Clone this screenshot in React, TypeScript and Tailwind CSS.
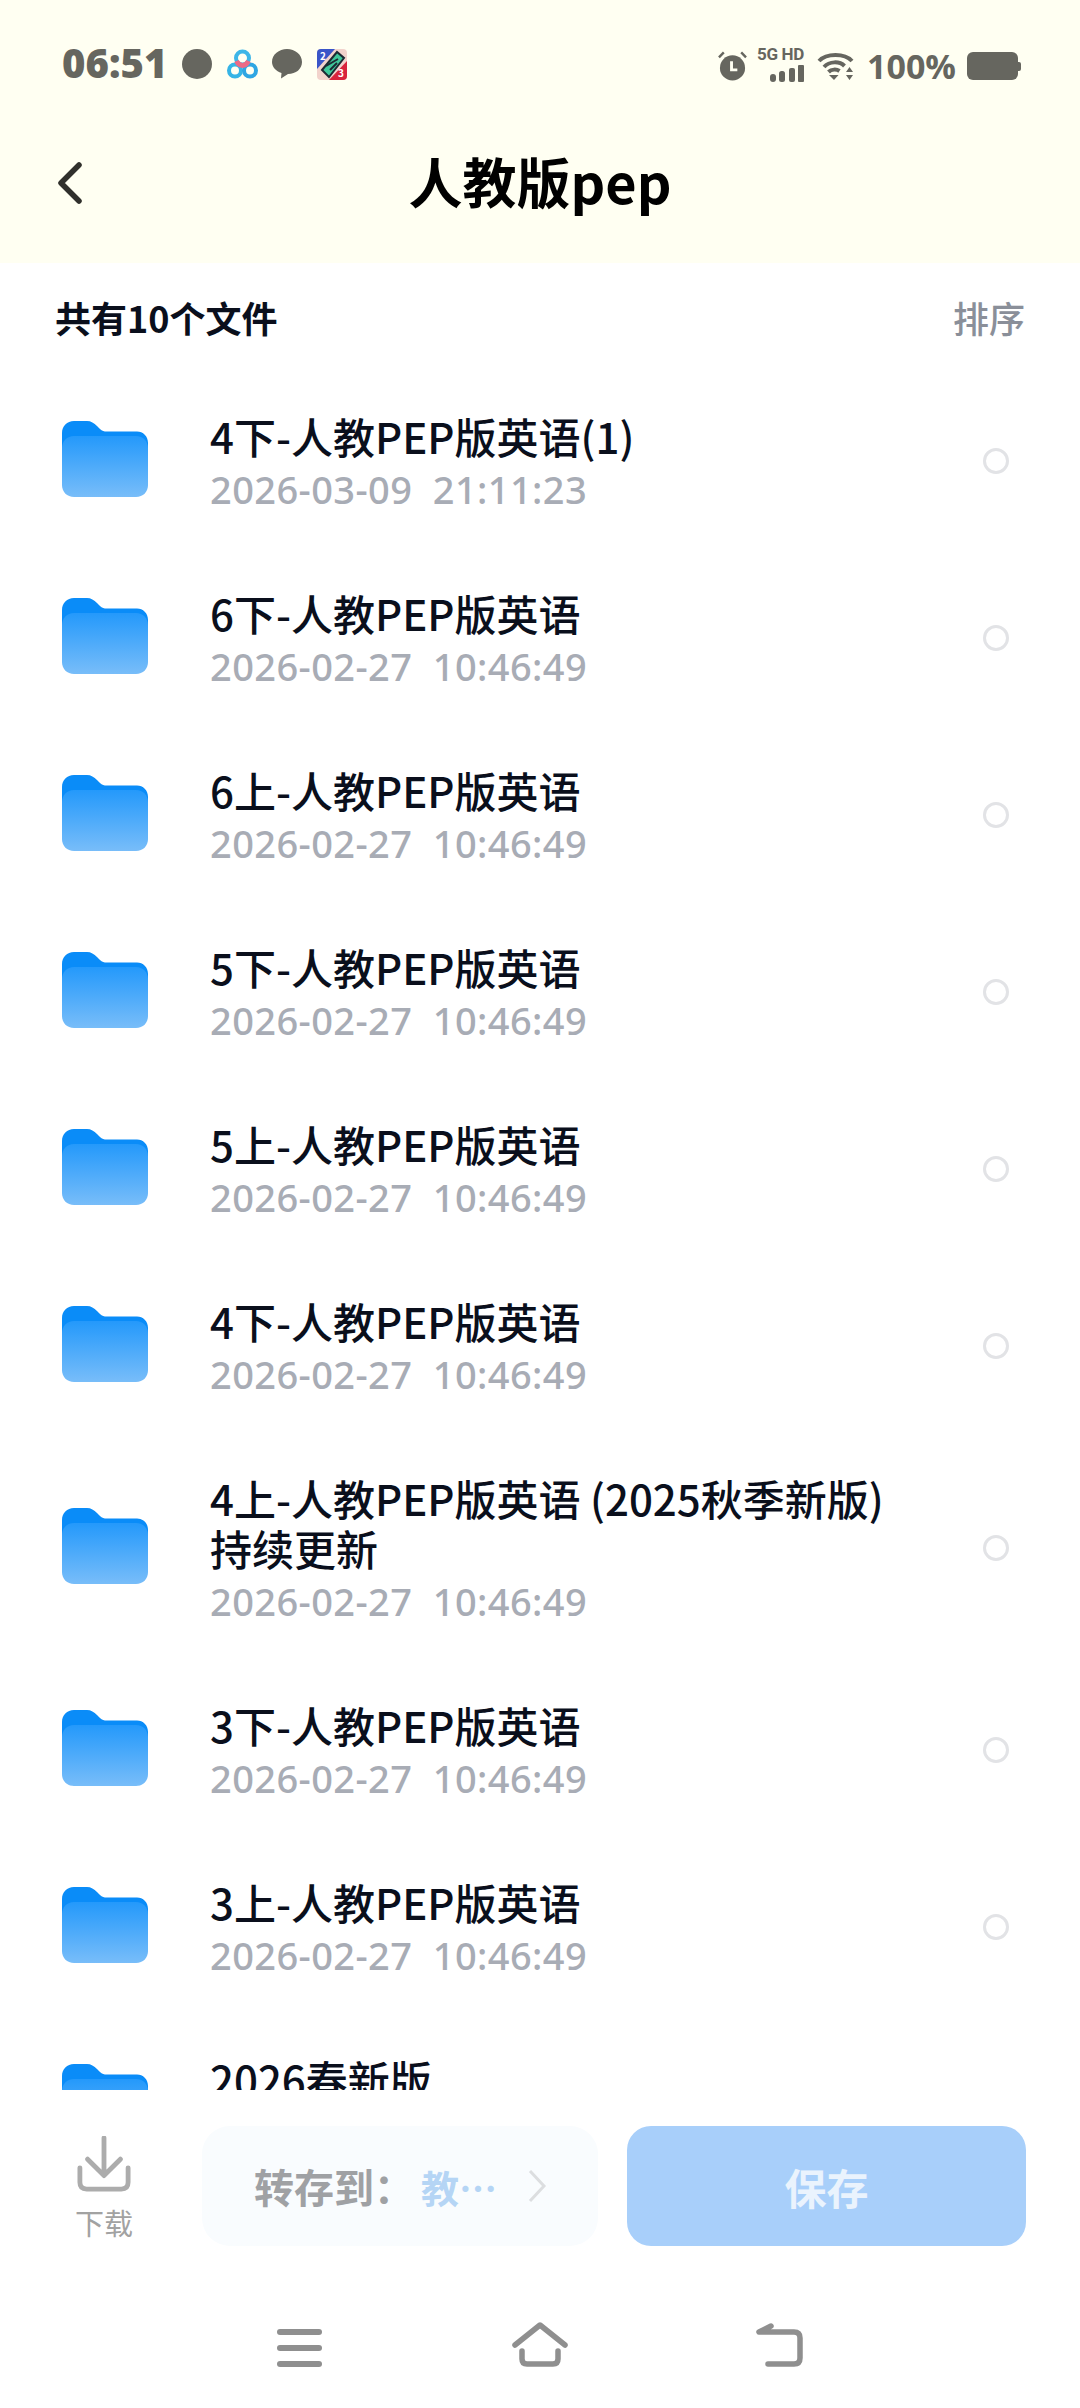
const files = [
  { name: '4下-人教PEP版英语(1)', date: '2026-03-09  21:11:23' },
  { name: '6下-人教PEP版英语', date: '2026-02-27  10:46:49' },
  { name: '6上-人教PEP版英语', date: '2026-02-27  10:46:49' },
  { name: '5下-人教PEP版英语', date: '2026-02-27  10:46:49' },
  { name: '5上-人教PEP版英语', date: '2026-02-27  10:46:49' },
  { name: '4下-人教PEP版英语', date: '2026-02-27  10:46:49' },
  { name: '4上-人教PEP版英语 (2025秋季新版)\n持续更新', date: '2026-02-27  10:46:49' },
  { name: '3下-人教PEP版英语', date: '2026-02-27  10:46:49' },
  { name: '3上-人教PEP版英语', date: '2026-02-27  10:46:49' },
  { name: '2026春新版', date: '2026-02-27  10:46:49' },
];

const FolderIcon = ({ id }: { id: number }) => (
  <svg width="86" height="76" viewBox="0 0 86 76" className="shrink-0 mb-[3px]">
    <defs>
      <linearGradient id={`folder${id}`} x1="0" y1="0" x2="0" y2="1">
        <stop offset="0" stopColor="#2499fb" />
        <stop offset="1" stopColor="#78bdf9" />
      </linearGradient>
    </defs>
    <path d="M0 12C0 5 5 0 12 0H25C29 0 32 2 35 5L38 8C40 10 42 10.500 45 10.500H75C81 10.500 86 15 86 22V40H0Z" fill="#0a8cf8" />
    <path d="M0 27C0 20 5 15 12 15H74C81 15 86 20 86 27V64C86 71 81 76 74 76H12C5 76 0 71 0 64Z" fill={`url(#folder${id})`} />
  </svg>
);

const StatusBar = () => (
  <div className="h-[130px] flex items-start justify-between pl-[62px] pr-[59px] pt-[48px]">
    <div className="flex items-center h-[36px] -mt-[2px]">
      <span className="w-[102px] mb-[3px] text-[40px] leading-none font-extrabold text-[#66665f] font-['Open_Sans',sans-serif]">06:51</span>
      <span className="w-[30px] h-[30px] rounded-full bg-[#66665f] ml-[18px]"></span>
      <svg width="31" height="30" viewBox="0 0 31 30" className="ml-[15px]" fill="none">
        <circle cx="15.500" cy="9" r="6.500" stroke="#3db6e8" strokeWidth="4" />
        <circle cx="8" cy="21.500" r="6" stroke="#36b4e6" strokeWidth="4" />
        <circle cx="23" cy="21.500" r="6" stroke="#2fa6e3" strokeWidth="4" />
        <path d="M9.500 12C11 15 13 16.500 15.500 16.500C18 16.500 20 15 21.500 12" stroke="#ec6a86" strokeWidth="5" />
      </svg>
      <svg width="30" height="30" viewBox="0 0 30 30" className="ml-[14px]">
        <path d="M15 0C23 0 30 5.500 30 13C30 20 24 25 16 25L9 29.500L9.500 24C4 22 0 18 0 13C0 5.500 7 0 15 0Z" fill="#66665f" />
      </svg>
      <svg width="30" height="31" viewBox="0 0 30 31" className="ml-[15px]">
        <rect width="30" height="31" rx="4" fill="#f2d3cc" />
        <path d="M0 4a4 4 0 0 1 4-4h14L0 20Z" fill="#3a55c8" />
        <path d="M30 27a4 4 0 0 1-4 4H12L30 12Z" fill="#d8243c" />
        <path d="M5 21L20 3L27 9L12 28Z" fill="#3fc79a" stroke="#1c2a33" strokeWidth="2" />
        <path d="M9 17L21 10M13 21L20 14" stroke="#1c2a33" strokeWidth="2" />
        <text x="3" y="11" fontSize="10" fontWeight="700" fill="#ffffff">2</text>
        <text x="21" y="28" fontSize="10" fontWeight="700" fill="#ffffff">3</text>
      </svg>
    </div>
    <div className="flex items-center h-[36px]">
      <svg width="29" height="30" viewBox="0 0 30 30">
        <circle cx="15" cy="17" r="13" fill="#66665f" />
        <path d="M14 10V19H20" stroke="#fffff2" strokeWidth="3" fill="none" />
        <path d="M1 6L6 1M29 6L24 1" stroke="#66665f" strokeWidth="2.500" />
      </svg>
      <div className="flex flex-col items-end ml-[10px] w-[47px]">
        <span className="text-[17px] leading-[14px] font-bold text-[#66665f] font-['Roboto',sans-serif] whitespace-nowrap mt-[-3px] tracking-[-0.3px]">5G HD</span>
        <svg width="34" height="17" viewBox="0 0 34 17" className="mt-[4px]">
          <rect x="0" y="9" width="6" height="8" rx="3" fill="#66665f" />
          <rect x="9" y="6" width="6" height="11" rx="2.500" fill="#66665f" />
          <rect x="19" y="3" width="6" height="14" rx="2" fill="#66665f" />
          <rect x="28" y="0" width="6" height="17" rx="1" fill="#66665f" />
        </svg>
      </div>
      <svg width="37" height="30" viewBox="0 0 36 30" className="ml-[13px]" fill="none">
        <path d="M1.500 10C9 2 27 2 34.500 10" stroke="#66665f" strokeWidth="4" />
        <path d="M6.500 16C12 10 22 10 27 15" stroke="#66665f" strokeWidth="4" />
        <path d="M11 21C14 18 19 18 22 20" stroke="#66665f" strokeWidth="4" />
        <path d="M11.500 24H21L16.500 29Z" fill="#66665f" />
        <path d="M32 16L35.500 21H28.500ZM28.500 24H35.500L32 29Z" fill="#66665f" />
      </svg>
      <span className="ml-[13px] text-[34px] leading-none font-bold text-[#66665f] font-['Open_Sans',sans-serif] whitespace-nowrap">100%</span>
      <div className="flex items-center ml-[11px]">
        <span className="w-[51px] h-[28px] rounded-[6px] bg-[#66665f]"></span>
        <span className="w-[3px] h-[9px] rounded-r-[2px] bg-[#66665f]"></span>
      </div>
    </div>
  </div>
);

const BottomBar = () => (
  <div className="shrink-0 h-[318px] bg-white">
    <div className="flex items-start pl-[70px] pt-[36px]">
      <div className="w-[68px] mt-[10px] flex flex-col items-center">
        <svg width="54" height="56" viewBox="0 0 56 58" fill="none" stroke="#acacac" strokeWidth="5" strokeLinecap="round" strokeLinejoin="round">
          <path d="M28 2V40M11 24L28 41L45 24" />
          <path d="M3 33V48C3 52 5 55 10 55H46C51 55 53 52 53 48V33" />
        </svg>
        <span className="mt-[15px] text-[29px] leading-[30px] text-[#a2a2a2] whitespace-nowrap">下载</span>
      </div>
      <div className="ml-[64px] w-[396px] h-[120px] rounded-[28px] bg-[#f9fcfe] flex items-center pl-[52px]">
        <span className="text-[40px] font-bold text-[#9fa1a4] whitespace-nowrap">转存到：</span>
        <span className="text-[38px] font-bold text-[#b5d5f5] whitespace-nowrap ml-[7px]">教…</span>
        <svg width="20" height="34" viewBox="0 0 20 34" className="ml-[30px]" fill="none" stroke="#dcdee0" strokeWidth="3">
          <path d="M3 2L17 17L3 32" />
        </svg>
      </div>
      <div className="ml-[29px] w-[399px] h-[120px] rounded-[24px] bg-[#a8cffa] flex items-center justify-center">
        <span className="text-[42px] font-bold text-[#eaf3fd]">保存</span>
      </div>
    </div>
    <div className="flex items-end mt-[76px] pl-[277px] h-[45px]">
      <div className="w-[45px] h-[38px] flex flex-col justify-between">
        <span className="h-[6px] rounded-full bg-[#8f8f8f]"></span>
        <span className="h-[6px] rounded-full bg-[#8f8f8f]"></span>
        <span className="h-[6px] rounded-full bg-[#8f8f8f]"></span>
      </div>
      <svg width="56" height="45" viewBox="0 0 56 45" className="ml-[190px]" fill="none" stroke="#8f8f8f" strokeWidth="5.500" strokeLinecap="round" strokeLinejoin="round">
        <path d="M3 23L28 3L53 23" />
        <path d="M10 29V37Q10 42 15 42H41Q46 42 46 37V29" />
      </svg>
      <svg width="48" height="45" viewBox="0 0 48 45" className="ml-[188px]" fill="none" stroke="#8f8f8f" strokeWidth="5.500" strokeLinecap="round" strokeLinejoin="round">
        <path d="M15 4L3 10H38Q44 10 44 16V36Q44 42 38 42H12" />
      </svg>
    </div>
  </div>
);

export default function App() {
  return (
    <div className="w-[1080px] h-[2408px] flex flex-col overflow-hidden bg-white font-['Noto_Sans_CJK_SC','Noto_Sans',sans-serif]">
      <div className="shrink-0 h-[263px] bg-[#fffff2]">
        <StatusBar />
        <div className="relative flex items-center justify-center h-[108px] mt-[-3px]">
          <svg width="26" height="42" viewBox="0 0 26 42" fill="none" stroke="#30302c" strokeWidth="5.500" strokeLinecap="round" strokeLinejoin="round" className="absolute left-[57px] top-[35px]">
            <path d="M22 3L4 21L22 39" />
          </svg>
          <span className="text-[54px] leading-[70px] font-bold text-black">人教版pep</span>
        </div>
      </div>
      <div className="shrink-0 flex items-center justify-between px-[55px] h-[58px] mt-[25px]">
        <span className="text-[36px] font-bold text-[#0a0f1c]">共有10个文件</span>
        <span className="text-[36px] font-medium text-[#8a8f99]">排序</span>
      </div>
      <div className="flex-1 min-h-0 overflow-hidden">
        <div className="mt-[26px]">
          {files.map((file, i) => (
            <div key={i} className="flex items-center pl-[62px] pr-[71px] py-[38.5px]">
              <FolderIcon id={i} />
              <div className="ml-[62px] flex-1 min-w-0">
                <div className="text-[42px] leading-[50px] font-medium text-[#0a0f1c] whitespace-pre-line">{file.name}</div>
                <div className="text-[38px] leading-[50px] font-medium text-[#a8acb5] whitespace-pre tracking-[0.4px] translate-y-[3px] font-['Noto_Sans',sans-serif]">{file.date}</div>
              </div>
              <span className="w-[26px] h-[26px] rounded-full border-[3px] border-[#e2e3e6] shrink-0"></span>
            </div>
          ))}
        </div>
      </div>
      <BottomBar />
    </div>
  );
}
